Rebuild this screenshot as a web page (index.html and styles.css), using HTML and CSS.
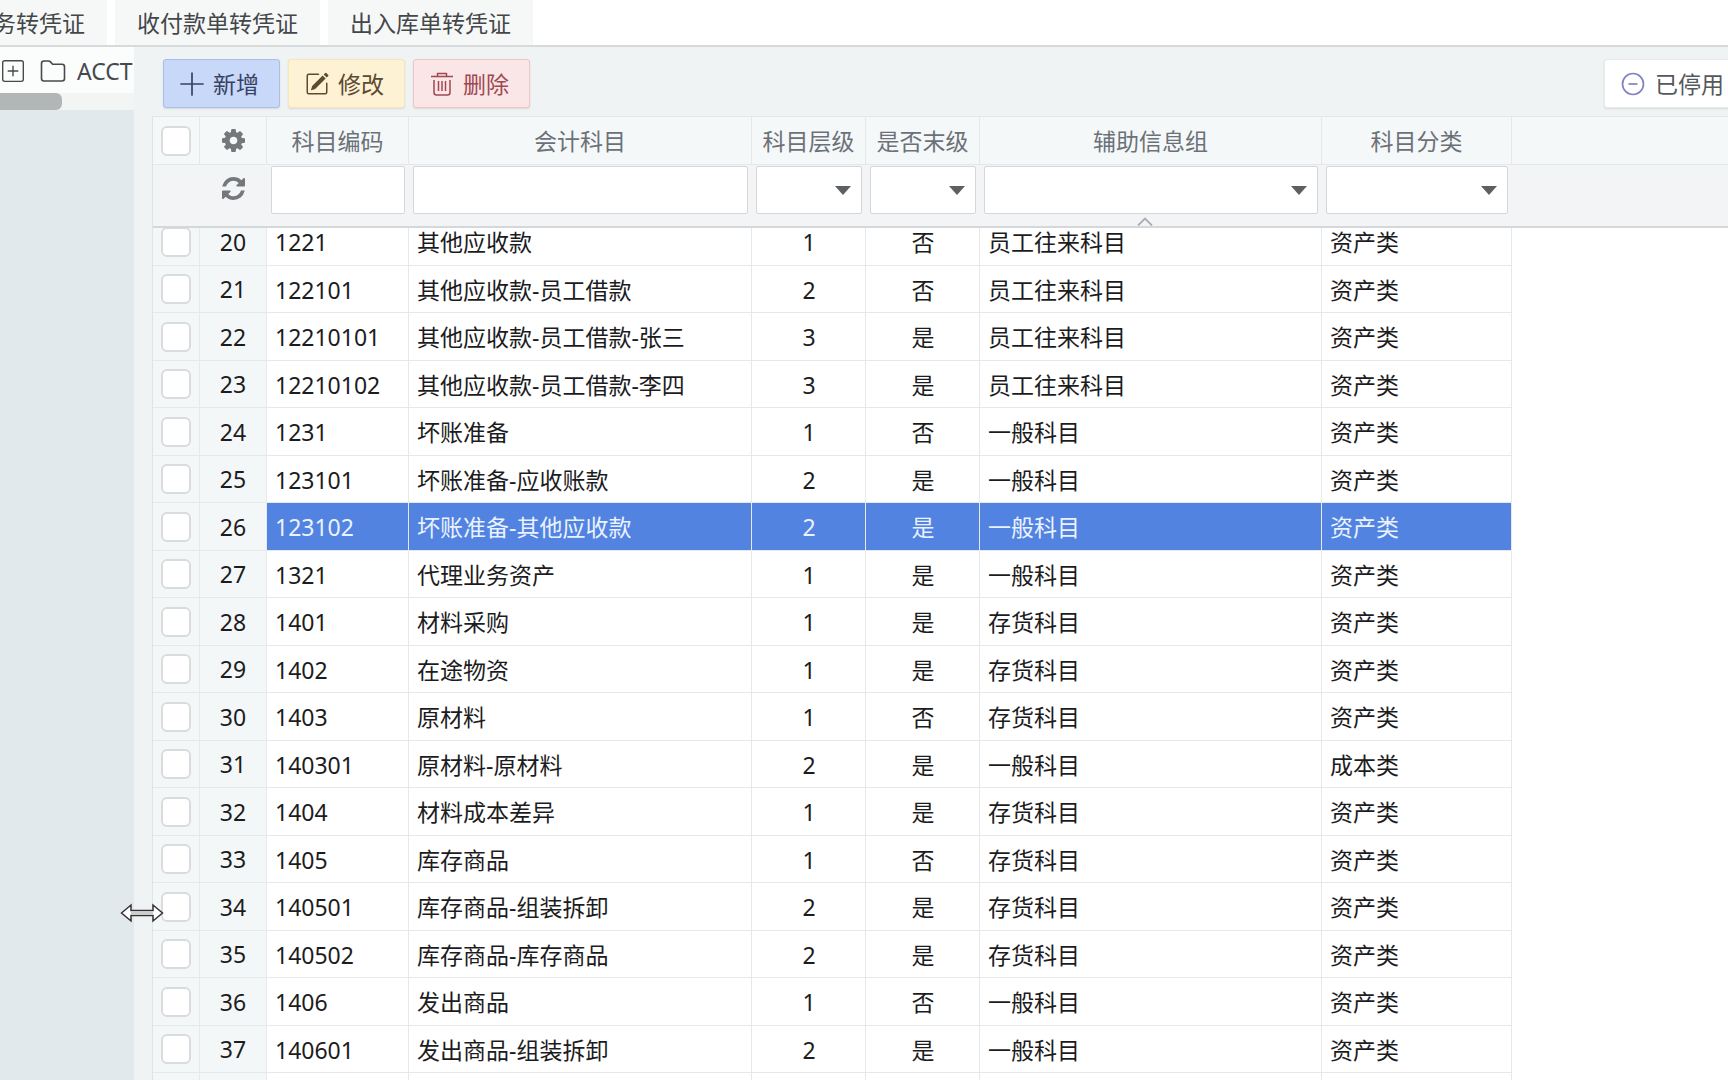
FILE: index.html
```html
<!DOCTYPE html>
<html lang="zh-CN">
<head>
<meta charset="utf-8">
<title>会计科目</title>
<link rel="stylesheet" href="styles.css">
</head>
<body>
<nav class="tabs">
  <a class="tab tab-cut" href="#">务转凭证</a>
  <a class="tab" href="#">收付款单转凭证</a>
  <a class="tab" href="#">出入库单转凭证</a>
</nav>
<div class="workspace">
  <aside class="tree">
    <div class="tree-node">
      <svg class="icon" viewBox="0 0 16 16"><path d="M14 1a1 1 0 0 1 1 1v12a1 1 0 0 1-1 1H2a1 1 0 0 1-1-1V2a1 1 0 0 1 1-1h12zM2 0a2 2 0 0 0-2 2v12a2 2 0 0 0 2 2h12a2 2 0 0 0 2-2V2a2 2 0 0 0-2-2H2z"/><path d="M8 4a.5.5 0 0 1 .5.5v3h3a.5.5 0 0 1 0 1h-3v3a.5.5 0 0 1-1 0v-3h-3a.5.5 0 0 1 0-1h3v-3A.5.5 0 0 1 8 4z"/></svg>
      <svg class="icon icon-folder" viewBox="0 0 26 22" fill="none" stroke="currentColor" stroke-width="1.6" stroke-linejoin="round"><path d="M1.500 3.500q0-2.500 2.500-2.500h4.500q1.200 0 2 .9l1.600 1.800q.5.600 1.400.6h8.500q2.500 0 2.500 2.500v11.700q0 2.500-2.500 2.500H4q-2.500 0-2.500-2.500z"/></svg>
      <span>ACCT</span>
    </div>
    <div class="scroll-track"><div class="scroll-thumb"></div></div>
  </aside>
  <main class="panel">
    <div class="toolbar">
      <button class="btn btn-add" type="button"><svg class="icon" viewBox="0 0 24 24" fill="none" stroke="currentColor" stroke-width="1.700" stroke-linecap="round"><path d="M12 1v22M1 12h22"/></svg>新增</button>
      <button class="btn btn-edit" type="button"><svg class="icon" viewBox="0 0 16 16"><path d="M15.502 1.940a.5.5 0 0 1 0 .706L14.459 3.690l-2-2L13.502.646a.5.5 0 0 1 .707 0l1.293 1.293zm-1.750 2.456-2-2L4.939 9.210a.5.5 0 0 0-.121.196l-.805 2.414a.25.25 0 0 0 .316.316l2.414-.805a.5.5 0 0 0 .196-.12l6.813-6.814z"/><path d="M1 13.500A1.500 1.500 0 0 0 2.500 15h11a1.500 1.500 0 0 0 1.500-1.500v-6a.5.5 0 0 0-1 0v6a.5.5 0 0 1-.5.5h-11a.5.5 0 0 1-.5-.5v-11a.5.5 0 0 1 .5-.5H9a.5.5 0 0 0 0-1H2.500A1.500 1.500 0 0 0 1 2.500v11z"/></svg>修改</button>
      <button class="btn btn-delete" type="button"><svg class="icon" viewBox="0 0 24 24" fill="none" stroke="currentColor" stroke-width="1.500" stroke-linejoin="round"><path d="M1 4.500h22M7.500 4.500V1.500h9v3M4 8v12.500q0 2.500 2.500 2.500h11q2.500 0 2.500-2.500V8M8.500 9v10M12 9v10M15.500 9v10"/></svg>删除</button>
      <button class="btn btn-disabled" type="button"><svg class="icon" viewBox="0 0 24 24" fill="none" stroke="currentColor" stroke-width="1.700"><circle cx="12" cy="12" r="10.500"/><path d="M7.500 12h9"/></svg>已停用</button>
    </div>
    <div class="grid">
      <div class="grid-head">
        <table>
          <colgroup><col class="c-check"><col class="c-num"><col class="c-code"><col class="c-name"><col class="c-short"><col class="c-short"><col class="c-aux"><col class="c-cat"><col></colgroup>
          <tr class="titles">
            <th><input class="check" type="checkbox" aria-label="全选"></th>
            <th><svg class="icon-fa" viewBox="0 128 1536 1536"><path d="M1024 896q0-106-75-181t-181-75-181 75-75 181 75 181 181 75 181-75 75-181zm512-109v222q0 12-8 23t-20 13l-185 28q-19 54-39 91 35 50 107 138 10 12 10 25t-9 23q-27 37-99 108t-94 71q-12 0-26-9l-138-108q-44 23-91 38-16 136-29 186-7 28-36 28h-222q-14 0-24.500-8.500t-11.500-21.500l-28-184q-49-16-90-37l-141 107q-10 9-25 9-14 0-25-11-126-114-165-168-7-10-7-23 0-12 8-23 15-21 51-66.500t54-70.500q-27-50-41-99l-183-27q-13-2-21-12.500t-8-23.500v-222q0-12 8-23t19-13l186-28q14-46 39-92-40-57-107-138-10-12-10-24 0-10 9-23 26-36 98.500-107.500t94.500-71.500q13 0 26 10l138 107q44-23 91-38 16-136 29-186 7-28 36-28h222q14 0 24.500 8.500t11.500 21.500l28 184q49 16 90 37l142-107q9-9 24-9 13 0 25 10 129 119 165 170 7 8 7 22 0 12-8 23-15 21-51 66.500t-54 70.500q26 50 41 98l183 28q13 2 21 12.500t8 23.500z"/></svg></th>
            <th>科目编码</th><th>会计科目</th><th>科目层级</th><th>是否末级</th><th>辅助信息组</th><th>科目分类</th><th></th>
          </tr>
          <tr class="filters">
            <td></td>
            <td><svg class="icon-fa" viewBox="0 128 1536 1536"><path d="M1511 1056q0 5-1 7-64 268-268 434.500t-478 166.500q-146 0-282.500-55t-243.500-157l-129 129q-19 19-45 19t-45-19-19-45v-448q0-26 19-45t45-19h448q26 0 45 19t19 45-19 45l-137 137q71 66 161 102t187 36q134 0 250-65t186-179q11-17 53-117 8-23 30-23h192q13 0 22.500 9.500t9.500 22.500zm25-800v448q0 26-19 45t-45 19h-448q-26 0-45-19t-19-45 19-45l138-138q-148-137-349-137-134 0-250 65t-186 179q-11 17-53 117-8 23-30 23h-199q-13 0-22.500-9.500t-9.500-22.500v-7q65-268 270-434.500t480-166.500q146 0 284 55.500t245 156.500l130-129q19-19 45-19t45 19 19 45z"/></svg></td>
            <td><input class="field" type="text" aria-label="科目编码"></td>
            <td><input class="field" type="text" aria-label="会计科目"></td>
            <td><div class="pick"><select class="field" aria-label="科目层级"><option></option></select></div></td>
            <td><div class="pick"><select class="field" aria-label="是否末级"><option></option></select></div></td>
            <td><div class="pick"><select class="field" aria-label="辅助信息组"><option></option></select></div></td>
            <td><div class="pick"><select class="field" aria-label="科目分类"><option></option></select></div></td>
            <td></td>
          </tr>
        </table>
        <svg class="collapse" viewBox="0 0 16 9" fill="none" stroke="currentColor" stroke-width="1.800"><path d="M1 8.500 8 1.500l7 7"/></svg>
      </div>
      <div class="grid-body">
        <table>
          <colgroup><col class="c-check"><col class="c-num"><col class="c-code"><col class="c-name"><col class="c-short"><col class="c-short"><col class="c-aux"><col class="c-cat"></colgroup>
          <tr><th><input class="check" type="checkbox" aria-label="20"></th><th>20</th><td>1221</td><td>其他应收款</td><td>1</td><td>否</td><td>员工往来科目</td><td>资产类</td></tr>
          <tr><th><input class="check" type="checkbox" aria-label="21"></th><th>21</th><td>122101</td><td>其他应收款-员工借款</td><td>2</td><td>否</td><td>员工往来科目</td><td>资产类</td></tr>
          <tr><th><input class="check" type="checkbox" aria-label="22"></th><th>22</th><td>12210101</td><td>其他应收款-员工借款-张三</td><td>3</td><td>是</td><td>员工往来科目</td><td>资产类</td></tr>
          <tr><th><input class="check" type="checkbox" aria-label="23"></th><th>23</th><td>12210102</td><td>其他应收款-员工借款-李四</td><td>3</td><td>是</td><td>员工往来科目</td><td>资产类</td></tr>
          <tr><th><input class="check" type="checkbox" aria-label="24"></th><th>24</th><td>1231</td><td>坏账准备</td><td>1</td><td>否</td><td>一般科目</td><td>资产类</td></tr>
          <tr><th><input class="check" type="checkbox" aria-label="25"></th><th>25</th><td>123101</td><td>坏账准备-应收账款</td><td>2</td><td>是</td><td>一般科目</td><td>资产类</td></tr>
          <tr class="selected"><th><input class="check" type="checkbox" aria-label="26"></th><th>26</th><td>123102</td><td>坏账准备-其他应收款</td><td>2</td><td>是</td><td>一般科目</td><td>资产类</td></tr>
          <tr><th><input class="check" type="checkbox" aria-label="27"></th><th>27</th><td>1321</td><td>代理业务资产</td><td>1</td><td>是</td><td>一般科目</td><td>资产类</td></tr>
          <tr><th><input class="check" type="checkbox" aria-label="28"></th><th>28</th><td>1401</td><td>材料采购</td><td>1</td><td>是</td><td>存货科目</td><td>资产类</td></tr>
          <tr><th><input class="check" type="checkbox" aria-label="29"></th><th>29</th><td>1402</td><td>在途物资</td><td>1</td><td>是</td><td>存货科目</td><td>资产类</td></tr>
          <tr><th><input class="check" type="checkbox" aria-label="30"></th><th>30</th><td>1403</td><td>原材料</td><td>1</td><td>否</td><td>存货科目</td><td>资产类</td></tr>
          <tr><th><input class="check" type="checkbox" aria-label="31"></th><th>31</th><td>140301</td><td>原材料-原材料</td><td>2</td><td>是</td><td>一般科目</td><td>成本类</td></tr>
          <tr><th><input class="check" type="checkbox" aria-label="32"></th><th>32</th><td>1404</td><td>材料成本差异</td><td>1</td><td>是</td><td>存货科目</td><td>资产类</td></tr>
          <tr><th><input class="check" type="checkbox" aria-label="33"></th><th>33</th><td>1405</td><td>库存商品</td><td>1</td><td>否</td><td>存货科目</td><td>资产类</td></tr>
          <tr><th><input class="check" type="checkbox" aria-label="34"></th><th>34</th><td>140501</td><td>库存商品-组装拆卸</td><td>2</td><td>是</td><td>存货科目</td><td>资产类</td></tr>
          <tr><th><input class="check" type="checkbox" aria-label="35"></th><th>35</th><td>140502</td><td>库存商品-库存商品</td><td>2</td><td>是</td><td>存货科目</td><td>资产类</td></tr>
          <tr><th><input class="check" type="checkbox" aria-label="36"></th><th>36</th><td>1406</td><td>发出商品</td><td>1</td><td>否</td><td>一般科目</td><td>资产类</td></tr>
          <tr><th><input class="check" type="checkbox" aria-label="37"></th><th>37</th><td>140601</td><td>发出商品-组装拆卸</td><td>2</td><td>是</td><td>一般科目</td><td>资产类</td></tr>
          <tr><th></th><th></th><td></td><td></td><td></td><td></td><td></td><td></td></tr>
        </table>
      </div>
    </div>
  </main>
</div>
<svg class="cursor" viewBox="0 0 44 20" fill="#fff" stroke="#333" stroke-width="1.500" stroke-linejoin="miter"><path d="M1.500 10 11 2v5.500h22V2l9.500 8-9.500 8v-5.500H11V18z"/><path d="M11 10h22" stroke="#999" stroke-width="1"/></svg>
</body>
</html>
```
FILE: styles.css
```css
* { box-sizing: border-box; }

body {
  margin: 0;
  height: 100vh;
  overflow: hidden;
  display: flex;
  flex-direction: column;
  background: #fff;
  color: #1c1c1e;
  font: 23px/32px "Noto Sans", "Noto Sans CJK SC", sans-serif;
}

/* document tabs */
.tabs {
  display: flex;
  gap: 8px;
  height: 47px;
  flex: none;
  border-bottom: 2px solid #d7d9da;
}
.tab {
  padding: 7px 22px 6px;
  background: #f6f8f8;
  color: #444749;
  text-decoration: none;
  white-space: nowrap;
}
.tab-cut { margin-left: -29px; }

.workspace {
  display: flex;
  flex: 1;
  min-height: 0;
}

/* account tree */
.tree {
  flex: none;
  width: 134px;
  overflow: hidden;
  background: #e1e9ed;
}
.tree-node {
  display: flex;
  align-items: center;
  height: 46px;
  padding: 2px 0 0 2px;
  background: #fbfcfc;
  color: #47494c;
}
.tree-node .icon { width: 22px; height: 22px; }
.tree-node .icon-folder { width: 26px; margin: 0 11px 0 16px; }
.scroll-track {
  height: 17px;
  background: #f3f5f5;
}
.scroll-thumb {
  width: 62px;
  height: 17px;
  border-radius: 0 6px 6px 0;
  background: #b3b6b7;
}

/* main panel */
.panel {
  flex: 1;
  min-width: 0;
  display: flex;
  flex-direction: column;
  padding-left: 18px;
  background: #eff3f4;
}
.toolbar {
  display: flex;
  flex: none;
  gap: 8px;
  padding: 12px 0 8px 11px;
}
.icon {
  flex: none;
  width: 24px;
  height: 24px;
  fill: currentColor;
}
.icon[fill="none"] { fill: none; }
.btn {
  display: flex;
  align-items: center;
  gap: 9px;
  height: 49px;
  padding: 0 20px 0 16px;
  border: 1px solid;
  border-radius: 3px;
  font: inherit;
  white-space: nowrap;
  box-shadow: 0 1px 2px rgba(0, 0, 0, .1);
}
.btn-add { background: #c8d8f8; border-color: #a9bfea; color: #364263; }
.btn-edit { background: #fdf2d3; border-color: #f8e5b8; color: #5c4a33; }
.btn-delete { background: #fae5e7; border-color: #f2c3c7; color: #a04850; }
.btn-disabled {
  margin-left: auto;
  gap: 10px;
  padding-right: 4px;
  background: #fff;
  border-color: #e8eaec;
  border-right: 0;
  border-radius: 3px 0 0 3px;
  color: #55585c;
}
.btn-disabled .icon { color: #7f82c4; }

/* data grid */
.grid {
  flex: 1;
  min-height: 0;
  display: flex;
  flex-direction: column;
  border-left: 1px solid #dfe4e7;
  background: #fff;
}
.grid table {
  table-layout: fixed;
  border-collapse: separate;
  border-spacing: 0;
}
.c-check { width: 47px; }
.c-num { width: 67px; }
.c-code { width: 142px; }
.c-name { width: 343px; }
.c-short { width: 114px; }
.c-aux { width: 342px; }
.c-cat { width: 190px; }
.grid th, .grid td { padding: 0; font-weight: 400; }

.grid-head {
  position: relative;
  flex: none;
  border-top: 1px solid #e2e6e8;
  border-bottom: 2px solid #d5d8da;
  background: #f2f4f6;
}
.grid-head table { width: 100%; }
.titles { height: 48px; }
.titles th {
  border-right: 1px solid #e4e8eb;
  border-bottom: 1px solid #e4e8eb;
  background: #f5f8f9;
  color: #6c7178;
}
.titles th:last-child { border-right: 0; }
.filters { height: 61px; }
.filters td {
  padding: 1px 4px 0;
  vertical-align: top;
  text-align: center;
}
.icon-fa {
  display: block;
  width: 23px;
  height: 23px;
  margin: 0 auto;
  fill: #75787b;
}
.filters .icon-fa { margin-top: 11px; }
.field {
  display: block;
  width: 100%;
  height: 48px;
  border: 1px solid #d3d7d9;
  border-radius: 2px;
  padding: 0 8px;
  background: #fff;
  color: inherit;
  font: inherit;
  appearance: none;
}
.pick { position: relative; }
.pick::after {
  content: "";
  position: absolute;
  right: 11px;
  top: 20px;
  width: 16px;
  height: 9px;
  background: #5d6062;
  clip-path: polygon(0 0, 100% 0, 50% 100%);
  pointer-events: none;
}
.collapse {
  position: absolute;
  left: 984px;
  bottom: 0;
  width: 16px;
  height: 9px;
  color: #a9adb0;
}

.check {
  display: block;
  width: 30px;
  height: 30px;
  margin: 0 auto;
  border: 2px solid #d9dcde;
  border-radius: 6px;
  background: #fff;
  appearance: none;
}

.grid-body {
  flex: 1;
  min-height: 0;
  overflow: hidden;
}
.grid-body table {
  width: 1359px;
  margin-top: -10px;
  line-height: 24px;
}
.grid-body tr { height: 48px; }
.grid-body tr:nth-child(even) { height: 47px; }
.grid-body th, .grid-body td {
  border-right: 1px solid #e6e9eb;
  border-bottom: 1px solid #e6e9eb;
  white-space: nowrap;
}
.grid-body th { background: #f4f7f8; }
.grid-body td { padding: 1px 7px 0 8px; }
.grid-body td:nth-child(5), .grid-body td:nth-child(6) { text-align: center; }
.selected td {
  background: #5283e0;
  color: #eaf2ff;
}

/* resize pointer over the splitter */
.cursor {
  position: absolute;
  left: 120px;
  top: 903px;
  width: 44px;
  height: 20px;
}
```
